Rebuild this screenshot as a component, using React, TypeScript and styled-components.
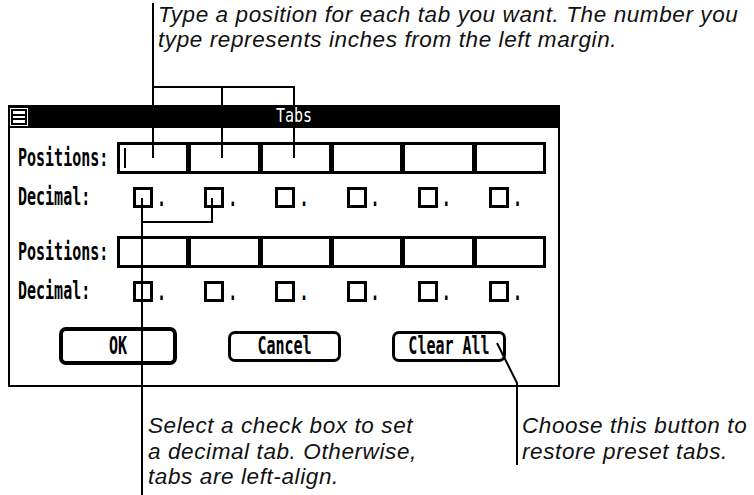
import React from 'react'
import styled, { createGlobalStyle, css } from 'styled-components'

const GlobalStyle = createGlobalStyle`
  html, body {
    margin: 0;
    padding: 0;
    background: #fff;
  }
`

const columns = [0, 1, 2, 3, 4, 5]

export default function App() {
  return (
    <Page>
      <GlobalStyle />
      <TopNote>
        Type a position for each tab you want. The number you
        <br />
        type represents inches from the left margin.
      </TopNote>

      <Dialog>
        <TitleBar>
          <MenuBox width="18" height="18" viewBox="0 0 18 18">
            <rect x="0" y="0" width="18" height="18" fill="#fff" />
            <rect x="2" y="2" width="14" height="14" fill="none" stroke="#000" strokeWidth="2" />
            <line x1="2" y1="7" x2="16" y2="7" stroke="#000" strokeWidth="2" />
            <line x1="2" y1="11" x2="16" y2="11" stroke="#000" strokeWidth="2" />
          </MenuBox>
          <Title>
            <Tall $scale={1.3}>Tabs</Tall>
          </Title>
        </TitleBar>

        <Body>
          {[0, 1].map((set) => (
            <TabSet key={set} $first={set === 0}>
              <Row>
                <Label>
                  <Tall>Positions:</Tall>
                </Label>
                <Fields>
                  {columns.map((c) => (
                    <Field key={c}>{set === 0 && c === 0 && <Caret />}</Field>
                  ))}
                </Fields>
              </Row>
              <DecimalRow>
                <Label>
                  <Tall>Decimal:</Tall>
                </Label>
                {columns.map((c) => (
                  <Decimal key={c}>
                    <Check />
                    <Dot>.</Dot>
                  </Decimal>
                ))}
              </DecimalRow>
            </TabSet>
          ))}

          <Buttons>
            <Button $default $width={118}>
              <Tall>OK</Tall>
            </Button>
            <Button $width={113}>
              <Tall>Cancel</Tall>
            </Button>
            <Button $width={114}>
              <Tall>Clear All</Tall>
            </Button>
          </Buttons>
        </Body>
      </Dialog>

      <BottomNotes>
        <Note>
          Select a check box to set
          <br />
          a decimal tab. Otherwise,
          <br />
          tabs are left-align.
        </Note>
        <Note>
          Choose this button to
          <br />
          restore preset tabs.
        </Note>
      </BottomNotes>

      <Leaders width="754" height="495" viewBox="0 0 754 495">
        <g fill="none" stroke="#000" strokeWidth="2">
          <polyline points="153,3 153,158" />
          <polyline points="153,87 294,87 294,158" />
          <polyline points="222,87 222,158" />
          <polyline points="142,198 142,495" />
          <polyline points="142,222 212,222 212,198" />
          <polyline points="497,343 517,383 517,465" />
        </g>
      </Leaders>
    </Page>
  )
}

const sysFont = css`
  font-family: 'DejaVu Sans Mono', 'Liberation Mono', monospace;
  font-size: 15px;
  line-height: 15px;
`

const noteFont = css`
  font-family: 'Liberation Sans', Arial, sans-serif;
  font-style: italic;
  font-size: 22.5px;
  letter-spacing: 0.6px;
  line-height: 25.2px;
  color: #111;
  white-space: nowrap;
`

const Page = styled.div`
  position: relative;
  width: 754px;
  height: 495px;
  overflow: hidden;
  background: #fff;
`

const Tall = styled.span<{ $scale?: number }>`
  display: inline-block;
  transform: scaleY(${(p) => p.$scale ?? 1.6});
`

const Dot = styled(Tall)`
  margin: 0 0 2px 2px;
`

const TopNote = styled.p`
  ${noteFont};
  margin: 0;
  padding: 2px 0 0 158px;
`

const Dialog = styled.section`
  margin: 53px 0 0 8px;
  width: 552px;
  box-sizing: border-box;
  border: 2px solid #000;
  border-top: none;
  background: #fff;
`

const TitleBar = styled.header`
  display: flex;
  align-items: center;
  height: 23px;
  margin: 0 -2px;
  background: #000;
`

const MenuBox = styled.svg`
  display: block;
  margin-left: 2px;
  flex: none;
`

const Title = styled.div`
  ${sysFont};
  flex: 1;
  color: #fff;
  text-align: center;
`

const Body = styled.div`
  padding: 14px 0 20px 8px;
`

const TabSet = styled.div<{ $first?: boolean }>`
  margin-top: ${(p) => (p.$first ? 0 : 28)}px;
`

const Row = styled.div`
  display: grid;
  grid-template-columns: 99px 429px;
  align-items: center;
  height: 32px;
`

const Label = styled.div`
  ${sysFont};
  font-weight: bold;
  color: #000;
`

const Fields = styled.div`
  display: flex;
  height: 32px;
  box-sizing: border-box;
  border: 3px solid #000;
`

const Field = styled.div`
  flex: 1;
  display: flex;
  align-items: center;
  padding-left: 4px;
  & + & {
    border-left: 5px solid #000;
  }
`

const Caret = styled.span`
  width: 2px;
  height: 20px;
  background: #000;
`

const DecimalRow = styled.div`
  display: grid;
  grid-template-columns: 99px repeat(6, 71.2px);
  align-items: center;
  height: 21px;
  margin-top: 13px;
`

const Decimal = styled.div`
  ${sysFont};
  font-weight: bold;
  display: flex;
  align-items: flex-end;
  padding-left: 16px;
  gap: 2px;
`

const Check = styled.span`
  width: 20px;
  height: 21px;
  box-sizing: border-box;
  border: 3px solid #000;
  background: #fff;
`

const Buttons = styled.div`
  display: flex;
  align-items: center;
  gap: 51px;
  margin: 25px 0 0 41px;
`

const Button = styled.button<{ $default?: boolean; $width: number }>`
  ${sysFont};
  font-weight: bold;
  width: ${(p) => p.$width}px;
  height: ${(p) => (p.$default ? 38 : 31)}px;
  padding: 0;
  border: ${(p) => (p.$default ? 4 : 3)}px solid #000;
  border-radius: 7px;
  background: #fff;
  color: #000;
`

const BottomNotes = styled.div`
  display: grid;
  grid-template-columns: 374px auto;
  margin-top: 26px;
  padding-left: 148px;
`

const Note = styled.p`
  ${noteFont};
  margin: 0;
`

const Leaders = styled.svg`
  position: absolute;
  top: 0;
  left: 0;
  pointer-events: none;
`
